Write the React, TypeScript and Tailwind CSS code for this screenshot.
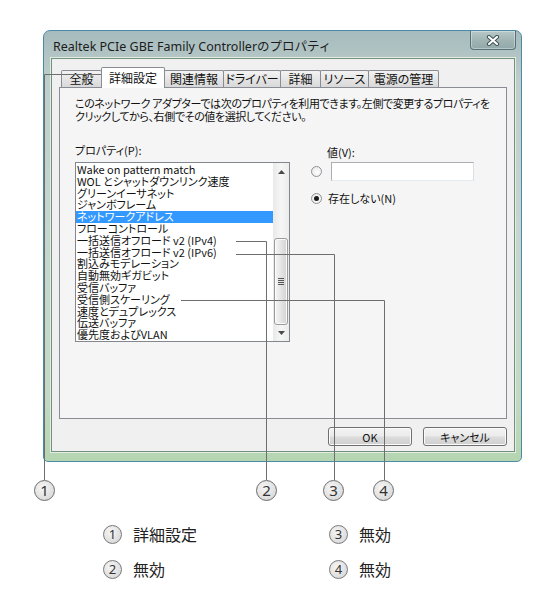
import React from 'react';

const items = [
  'Wake on pattern match',
  'WOL とシャットダウンリンク速度',
  'グリーンイーサネット',
  'ジャンボフレーム',
  'ネットワークアドレス',
  'フローコントロール',
  '一括送信オフロード v2 (IPv4)',
  '一括送信オフロード v2 (IPv6)',
  '割込みモデレーション',
  '自動無効ギガビット',
  '受信バッファ',
  '受信側スケーリング',
  '速度とデュプレックス',
  '伝送バッファ',
  '優先度およびVLAN',
];

const tabs = [
  { label: '全般', cls: 'w-[41px]' },
  { label: '詳細設定', cls: 'w-[64px]', sel: true },
  { label: '関連情報', cls: 'w-[60px]' },
  { label: 'ドライバー', cls: 'w-[58px]' },
  { label: '詳細', cls: 'w-[41px]' },
  { label: 'リソース', cls: 'w-[49px]' },
  { label: '電源の管理', cls: 'w-[71px]' },
];

function Radio({ checked }: { checked?: boolean }) {
  return (
    <div className="w-[11px] h-[11px] rounded-full border border-[#8e9297] bg-[radial-gradient(circle_at_60%_60%,#ffffff,#e2e2e2)] flex items-center justify-center shrink-0">
      {checked && <div className="w-[5px] h-[5px] rounded-full bg-[#1a1a1a]" />}
    </div>
  );
}

function Scrollbar() {
  return (
    <div className="w-[16px] h-full flex flex-col bg-[linear-gradient(90deg,#e9e9e9,#f6f6f6_50%,#ececec)]">
      <div className="h-[17px] flex items-center justify-center pt-[1px]">
        <svg width="7" height="4" viewBox="0 0 7 4"><polygon points="0,4 3.5,0 7,4" fill="#4a4a4a" /></svg>
      </div>
      <div className="flex-1">
        <div className="mt-[58px] mx-[1px] h-[87px] rounded-[3px] border border-[#9b9b9b] bg-[linear-gradient(90deg,#f6f6f6,#e6e6e6_45%,#d2d2d2)] shadow-[inset_0_0_0_1px_#fbfbfb] flex flex-col items-center justify-center gap-[1px]">
          <div className="w-[6px] h-[1px] bg-[#555]" />
          <div className="w-[6px] h-[1px] bg-[#555]" />
          <div className="w-[6px] h-[1px] bg-[#555]" />
          <div className="w-[6px] h-[1px] bg-[#555]" />
        </div>
      </div>
      <div className="h-[17px] flex items-center justify-center">
        <svg width="7" height="4" viewBox="0 0 7 4"><polygon points="0,0 7,0 3.5,4" fill="#4a4a4a" /></svg>
      </div>
    </div>
  );
}

function Button({ label }: { label: string }) {
  return (
    <div className="w-[84px] h-[19px] rounded-[3px] border border-[#707070] bg-[linear-gradient(180deg,#f3f3f3_0%,#ebebeb_48%,#dcdcdc_52%,#cfcfcf_100%)] shadow-[inset_0_0_0_1px_#fbfbfb] flex items-center justify-center text-[11px] leading-[12px] text-[#111]">
      {label}
    </div>
  );
}

function Window() {
  return (
    <div className="w-[479px] h-[432px] flex flex-col rounded-t-[7px] rounded-b-[5px] border border-[#4a8ba6] bg-[linear-gradient(180deg,#a6bbbd_0%,#bfcecc_12%,#c6d5d0_45%,#c4d9c4_85%,#b5d5b1_100%)]">
      <div className="h-[27px] flex justify-between shrink-0">
        <div className="pl-[9px] pt-[8px] text-[12.5px] leading-[16px] text-[#1c1c1c] whitespace-nowrap [font-family:'Noto_Sans','Noto_Sans_CJK_JP',sans-serif] [font-feature-settings:normal]">
          Realtek PCIe GBE Family Controllerのプロパティ
        </div>
        <div className="mr-[5px] w-[46px] h-[19px] rounded-b-[4px] border border-t-0 border-[#55727a] bg-[linear-gradient(180deg,#b9c8c8,#9fb3b3_55%,#92a8a9)] shadow-[inset_0_0_0_1px_rgba(255,255,255,0.35)] flex items-center justify-center">
          <svg width="14" height="11" viewBox="0 0 14 11">
            <path d="M3 2 L11 9 M11 2 L3 9" stroke="#3e5256" strokeWidth="4.2" strokeLinecap="round" />
            <path d="M3 2 L11 9 M11 2 L3 9" stroke="#ffffff" strokeWidth="2.2" strokeLinecap="round" />
          </svg>
        </div>
      </div>
      <div className="ml-[7px] mr-[6px] mb-[9px] flex-1 flex flex-col border border-[#71907f] bg-[#f0f0f0] shadow-[0_0_0_1px_#e3eee0]">
        <div className="mx-[7px] pt-[8px]">
          <div className="h-[20px] flex items-end pl-[2px]">
            {tabs.map((t, i) =>
              t.sel ? (
                <div key={i} className={`${t.cls} h-[21px] -mb-px -ml-px relative z-10 bg-white border border-b-0 border-[#898c95] rounded-t-[2px] flex items-start justify-center pt-[3px] text-[12px] leading-[14px] text-[#111]`}>
                  {t.label}
                </div>
              ) : (
                <div key={i} className={`${t.cls} h-[17px] ${i === 0 ? '' : '-ml-px'} bg-[linear-gradient(180deg,#f3f3f3,#e4e4e4_55%,#d9d9d9)] border border-b-0 border-[#898c95] rounded-t-[2px] flex items-center justify-center text-[12px] leading-[14px] text-[#111]`}>
                  {t.label}
                </div>
              )
            )}
          </div>
          <div className="h-[332px] border border-[#898c95] bg-[#f5f5f5] pl-[15px] pt-[9px]">
            <div className="text-[11px] leading-[12.5px] tracking-[-0.4px] whitespace-nowrap text-[#111]">
              このネットワーク アダプターでは次のプロパティを利用できます。左側で変更するプロパティを
              <br />
              クリックしてから、右側でその値を選択してください。
            </div>
            <div className="flex mt-[22px]">
              <div className="flex flex-col">
                <div className="text-[11px] leading-[12px] text-[#111]">プロパティ(P):</div>
                <div className="mt-[6px] w-[215px] h-[180px] border border-[#828790] bg-white flex">
                  <div className="flex-1 overflow-hidden pt-[1px]">
                    {items.map((it, i) => (
                      <div
                        key={i}
                        className={`h-[11.8px] leading-[11.8px] pl-[1px] whitespace-nowrap text-[11px] ${i === 4 ? 'bg-[#3399ff] text-white' : 'text-[#111]'}`}
                      >
                        {it}
                      </div>
                    ))}
                  </div>
                  <Scrollbar />
                </div>
              </div>
              <div className="ml-[21px] pt-[2px] flex flex-col">
                <div className="pl-[16px] text-[11px] leading-[12px] text-[#111]">値(V):</div>
                <div className="mt-[4px] flex items-center">
                  <Radio />
                  <div className="ml-[9px] w-[143px] h-[19px] bg-white border border-[#abadb3] border-r-[#dbdfe6] border-b-[#e3e9ef]" />
                </div>
                <div className="mt-[11px] h-[12px] flex items-center">
                  <Radio checked />
                  <div className="ml-[6px] text-[11px] leading-[12px] text-[#111] whitespace-nowrap">存在しない(N)</div>
                </div>
              </div>
            </div>
          </div>
        </div>
        <div className="mt-[8px] pr-[7px] flex justify-end gap-[11px]">
          <Button label="OK" />
          <Button label="キャンセル" />
        </div>
      </div>
    </div>
  );
}

function Num({ n, size }: { n: string; size: 'big' | 'small' }) {
  return size === 'big' ? (
    <div className="w-[21px] h-[21px] rounded-full border border-[#6b6b6b] bg-[radial-gradient(circle_at_40%_35%,#f6f6f6,#d2d2d2)] flex items-center justify-center text-[15px] leading-[15px] text-[#333] [font-family:'Noto_Sans',sans-serif] shrink-0">
      {n}
    </div>
  ) : (
    <div className="w-[19px] h-[19px] rounded-full border border-[#7a7a7a] bg-[radial-gradient(circle_at_40%_35%,#f6f6f6,#d2d2d2)] flex items-center justify-center text-[13px] leading-[13px] text-[#333] [font-family:'Noto_Sans',sans-serif] shrink-0">
      {n}
    </div>
  );
}

export default function App() {
  return (
    <div className="relative w-[541px] h-[593px] bg-white overflow-hidden [font-family:'Noto_Sans_CJK_JP',sans-serif] [font-feature-settings:'palt']">
      <div className="pt-[30px] pl-[43px]">
        <Window />
      </div>
      <div className="mt-[18px] pl-[34px] flex">
        <Num n="1" size="big" />
        <div className="ml-[201px]"><Num n="2" size="big" /></div>
        <div className="ml-[46px]"><Num n="3" size="big" /></div>
        <div className="ml-[29px]"><Num n="4" size="big" /></div>
      </div>
      <div className="mt-[24px] pl-[103px] grid grid-cols-[226px_auto] gap-y-[16px] text-[16px] leading-[19px] text-[#222]">
        <div className="flex items-center gap-[11px]"><Num n="1" size="small" /><span>詳細設定</span></div>
        <div className="flex items-center gap-[11px]"><Num n="3" size="small" /><span>無効</span></div>
        <div className="flex items-center gap-[11px]"><Num n="2" size="small" /><span>無効</span></div>
        <div className="flex items-center gap-[11px]"><Num n="4" size="small" /><span>無効</span></div>
      </div>
      <svg className="absolute inset-0 pointer-events-none" width="541" height="593" viewBox="0 0 541 593">
        <g stroke="#6e6e6e" strokeWidth="1" fill="none">
          <path d="M44.5 74.5 H101" />
          <path d="M44.5 74.5 V480" />
          <path d="M236 241.5 H266.5 V480" />
          <path d="M236 254.5 H334.5 V480" />
          <path d="M181 300.5 H384.5 V480" />
        </g>
      </svg>
    </div>
  );
}
